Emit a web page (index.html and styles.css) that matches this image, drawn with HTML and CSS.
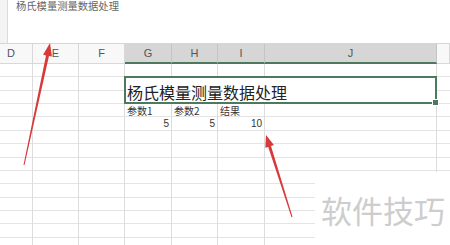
FILE: index.html
```html
<!DOCTYPE html>
<html>
  <head>
    <title>杨氏模量测量数据处理</title>
    <meta charset="UTF-8">
    <link rel="stylesheet" href="styles.css">
  </head>
  <body>
    <div class="formula">
      <div class="formula-side"></div>
      <div class="formula-text">杨氏模量测量数据处理</div>
    </div>
    <div class="cols">
      <div class="col">D</div>
      <div class="col">E</div>
      <div class="col">F</div>
      <div class="col sel">G</div>
      <div class="col sel">H</div>
      <div class="col sel">I</div>
      <div class="col sel">J</div>
      <div class="col"></div>
    </div>
    <div class="cells">
      <div class="title">杨氏模量测量数据处理</div>
      <div class="cell label" style="grid-column: 4; grid-row: 4;">参数1</div>
      <div class="cell label" style="grid-column: 5; grid-row: 4;">参数2</div>
      <div class="cell label" style="grid-column: 6; grid-row: 4;">结果</div>
      <div class="cell num" style="grid-column: 4; grid-row: 5;">5</div>
      <div class="cell num" style="grid-column: 5; grid-row: 5;">5</div>
      <div class="cell num" style="grid-column: 6; grid-row: 5;">10</div>
    </div>
    <div class="mark">软件技巧</div>
    <svg class="arrows" width="450" height="245" viewBox="0 0 450 245">
      <polygon fill="#d8393b" points="50,43 51.9,56.6 48.97,56 24.5,165.1 23.5,164.9 46.03,55.4 43.1,54.8"/>
      <polygon fill="#d8393b" points="266,135 273.9,145 271,145.9 292.5,216.8 291.5,217.2 268.2,146.9 265.3,147.8"/>
    </svg>
  </body>
</html>
```

FILE: styles.css
```css
html, body {
  height: 100%;
  width: 100%;
}
body {
  margin: 0;
  position: relative;
  overflow: hidden;
  background: #fff;
  font-family: 'Noto Sans CJK SC', 'Liberation Sans', sans-serif;
  color: #333;
}
.formula {
  display: flex;
  height: 43px;
  border-bottom: 1px solid #d6d6d6;
}
.formula-side {
  width: 7px;
  background: #f3f3f3;
  border-right: 1px solid #dcdcdc;
}
.formula-text {
  padding: 0 0 0 8px;
  margin-top: -1px;
  font-size: 10.3px;
  line-height: 13px;
  color: #666;
}
.cols {
  display: grid;
  grid-template-columns: 33px 46px 46px 47px 46px 47px 172px 1fr;
  height: 20px;
}
.col {
  background: #f8f8f8;
  border-right: 1px solid #d8d8d8;
  border-bottom: 1px solid #d8d8d8;
  font-family: 'Liberation Sans', sans-serif;
  font-size: 11px;
  line-height: 19px;
  text-align: center;
  color: #555;
}
.col.sel {
  background: #d6d6d6;
  border-right-color: #c4c4c4;
  border-bottom: 2px solid #4d7a5c;
  line-height: 18px;
}
.col:first-child {
  text-align: left;
  padding-left: 7px;
}
.cells {
  display: grid;
  grid-template-columns: 33px 46px 46px 47px 46px 47px 172px 1fr;
  grid-auto-rows: 13.36px;
  height: 181px;
  background-image:
    linear-gradient(to right,
      transparent 32px, #dcdcdc 32px 33px,
      transparent 33px 78px, #dcdcdc 78px 79px,
      transparent 79px 124px, #dcdcdc 124px 125px,
      transparent 125px 171px, #dcdcdc 171px 172px,
      transparent 172px 217px, #dcdcdc 217px 218px,
      transparent 218px 264px, #dcdcdc 264px 265px,
      transparent 265px 436px, #dcdcdc 436px 437px,
      transparent 437px),
    repeating-linear-gradient(to bottom, transparent 0 12.36px, #e4e4e4 12.36px 13.36px);
}
.title {
  grid-column: 4 / 8;
  grid-row: 2 / 4;
  position: relative;
  margin: -1px 0 0 -1px;
  background: #fff;
  border: 2px solid #4d7a5c;
  display: flex;
  align-items: flex-end;
  padding: 0 0 0 1px;
  font-size: 16px;
  line-height: 19px;
  color: #222;
  overflow: visible;
}
.title::after {
  content: '';
  position: absolute;
  right: -4px;
  bottom: -4px;
  width: 5px;
  height: 5px;
  background: #4d7a5c;
  border: 1px solid #fff;
}
.cell {
  font-size: 10px;
  line-height: 13px;
  color: #333;
  white-space: nowrap;
}
.label {
  padding-left: 2px;
}
.num {
  text-align: right;
  padding-right: 3px;
  font-family: 'Liberation Sans', sans-serif;
}
.mark {
  position: absolute;
  left: 315px;
  top: 172px;
  right: 0;
  bottom: 0;
  background: #fff;
  padding: 18px 0 0 6px;
  font-size: 31px;
  line-height: 40px;
  color: #cdcdcd;
  white-space: nowrap;
}
.arrows {
  position: absolute;
  left: 0;
  top: 0;
}
```
